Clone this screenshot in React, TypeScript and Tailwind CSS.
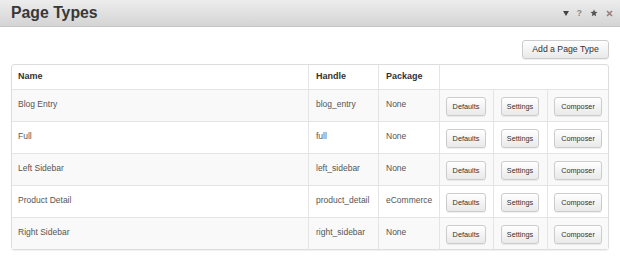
const rows = [
  { name: "Blog Entry", handle: "blog_entry", pkg: "None" },
  { name: "Full", handle: "full", pkg: "None" },
  { name: "Left Sidebar", handle: "left_sidebar", pkg: "None" },
  { name: "Product Detail", handle: "product_detail", pkg: "eCommerce" },
  { name: "Right Sidebar", handle: "right_sidebar", pkg: "None" },
];

function Btn({ children, className = "" }: { children: React.ReactNode; className?: string }) {
  return (
    <button
      className={
        "h-[19px] rounded-[3px] border border-[#cccccc] bg-gradient-to-b from-white to-[#e9e9e9] text-[7.3px] leading-none text-[#333] shadow-[0_1px_1px_rgba(0,0,0,0.07)] " +
        className
      }
    >
      {children}
    </button>
  );
}

export default function App() {
  return (
    <div className="w-[620px] h-[271px] bg-white font-['Liberation_Sans',Arial,sans-serif] text-[#555]">
      {/* title bar */}
      <div className="h-[27px] flex items-center justify-between pl-[11px] pr-[7px] bg-gradient-to-b from-[#ededed] to-[#d4d4d4] border-b border-[#c6c6c6]">
        <h1 className="text-[15.8px] font-bold text-[#383838] leading-none">Page Types</h1>
        <div className="flex items-center gap-[8px]">
          <svg width="6" height="5" viewBox="0 0 6 5">
            <path d="M0 0h6L3 5z" fill="#444" />
          </svg>
          <span className="text-[9px] font-bold leading-none text-[#888]">?</span>
          <svg width="8" height="8" viewBox="0 0 24 24">
            <path d="M12 1.5l3.1 7 7.4.7-5.6 5 1.7 7.4L12 17.8l-6.6 3.8 1.7-7.4-5.6-5 7.4-.7z" fill="#555" />
          </svg>
          <svg width="7" height="7" viewBox="0 0 7 7">
            <path d="M1 1l5 5M6 1L1 6" stroke="#9a7c7c" strokeWidth="1.6" />
          </svg>
        </div>
      </div>

      <div className="pl-[11px]">
        <div className="flex justify-end pt-[13px] pb-[5px] pr-[11px]">
          <Btn className="h-[19px] w-[87px] text-[8.7px]">Add a Page Type</Btn>
        </div>

        <table className="table-fixed w-[598px] border-separate border-spacing-0 rounded-[3px] border border-[#dddddd] text-[8.5px] shadow-[0_1px_1px_rgba(0,0,0,0.06)]">
          <colgroup>
            <col className="w-[297px]" />
            <col className="w-[70px]" />
            <col className="w-[61px]" />
            <col className="w-[54px]" />
            <col className="w-[54px]" />
            <col className="w-[60px]" />
          </colgroup>
          <thead>
            <tr className="h-[24px]">
              <th className="text-left text-[9px] font-bold text-[#333] px-[6px] border-r border-[#e4e4e4]">Name</th>
              <th className="text-left text-[9px] font-bold text-[#333] px-[7px] border-r border-[#e4e4e4]">Handle</th>
              <th className="text-left text-[9px] font-bold text-[#333] px-[7px] border-r border-[#e4e4e4]">Package</th>
              <th colSpan={3}></th>
            </tr>
          </thead>
          <tbody>
            {rows.map((r, i) => (
              <tr key={r.handle} className={"h-[32px] " + (i % 2 === 0 ? "bg-[#f9f9f9]" : "bg-white")}>
                <td className="align-top pt-[8px] px-[6px] border-t border-r border-[#e4e4e4]">{r.name}</td>
                <td className="align-top pt-[8px] px-[7px] border-t border-r border-[#e4e4e4]">{r.handle}</td>
                <td className="align-top pt-[8px] px-[7px] border-t border-r border-[#e4e4e4]">{r.pkg}</td>
                <td className="align-top pt-[7px] px-[6px] border-t border-r border-[#e4e4e4]">
                  <Btn className="w-[40px]">Defaults</Btn>
                </td>
                <td className="align-top pt-[7px] px-[7px] border-t border-r border-[#e4e4e4]">
                  <Btn className="w-[38px]">Settings</Btn>
                </td>
                <td className="align-top pt-[7px] px-[6px] border-t border-[#e4e4e4]">
                  <Btn className="w-[48px]">Composer</Btn>
                </td>
              </tr>
            ))}
          </tbody>
        </table>
      </div>
    </div>
  );
}
